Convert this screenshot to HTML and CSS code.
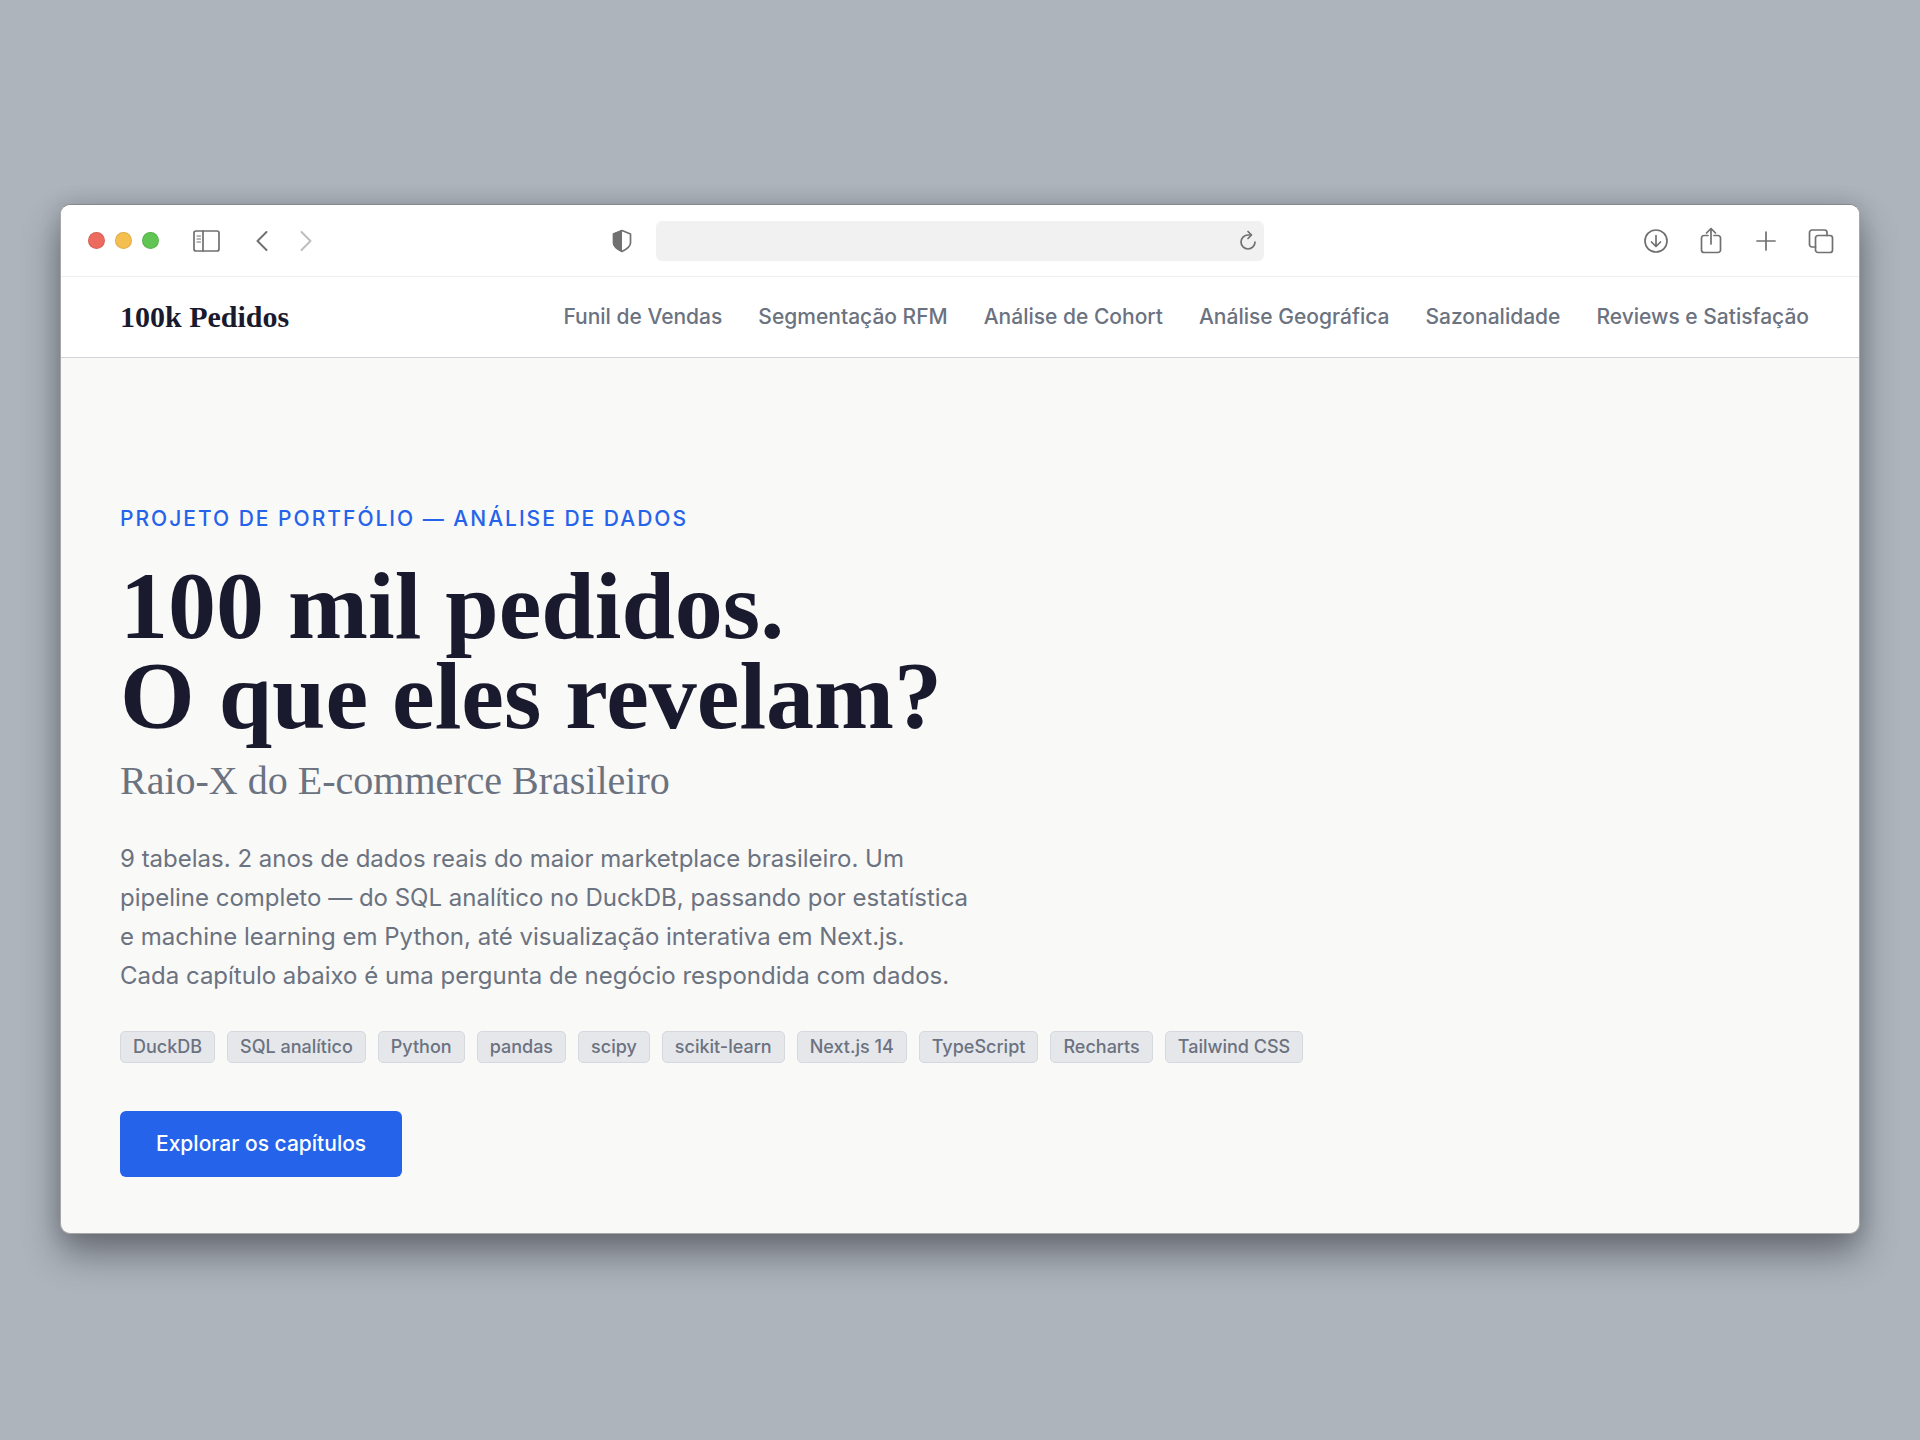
FILE: index.html
```
<!DOCTYPE html>
<html lang="pt-BR">
<head>
<meta charset="UTF-8">
<meta name="viewport" content="width=device-width, initial-scale=1.0">
<title>100k Pedidos</title>
<link rel="stylesheet" href="styles.css">
</head>
<body>

<div class="window">
  <div class="toolbar">
    <div class="toolbar-left">
      <div class="lights">
        <span class="light red"></span>
        <span class="light yellow"></span>
        <span class="light green"></span>
      </div>
      <button type="button" class="icon-btn sidebar-btn" aria-label="Barra lateral">
        <svg viewBox="0 0 28 28"><rect x="2" y="4" width="25" height="20" rx="2"/><path d="M11 4v20"/><path class="thin" d="M5 9h3.500M5 12h3.500M5 15h3.500"/></svg>
      </button>
      <div class="history">
        <button type="button" class="icon-btn" aria-label="Voltar">
          <svg viewBox="0 0 28 28"><path class="bold" d="M18.500 5L9.500 14l9 9"/></svg>
        </button>
        <button type="button" class="icon-btn faded" aria-label="Avançar">
          <svg viewBox="0 0 28 28"><path class="bold" d="M9.500 5l9 9-9 9"/></svg>
        </button>
      </div>
      <button type="button" class="icon-btn shield-btn" aria-label="Privacidade">
        <svg viewBox="0 0 28 28"><path d="M14 3.500l8.500 3.500v9c0 3.500-4.500 6.500-8.500 8.500-4-2-8.500-5-8.500-8.500V7z"/><path class="solid" d="M14 3L5 6.500V16c0 4 5 7 9 9z"/></svg>
      </button>
    </div>
    <div class="address">
      <input type="text" class="address-input" aria-label="Endereço">
      <button type="button" class="reload-btn" aria-label="Recarregar">
        <svg viewBox="0 0 20 22"><path d="M17 12a7 7 0 1 1-7-7h3"/><path d="M10 1.500L13.500 5 10 8.500"/></svg>
      </button>
    </div>
    <div class="toolbar-right">
      <button type="button" class="icon-btn" aria-label="Downloads">
        <svg viewBox="0 0 28 28"><circle cx="14" cy="14" r="11"/><path d="M14 8.500v10.500M9.500 15l4.500 4.500 4.500-4.500"/></svg>
      </button>
      <button type="button" class="icon-btn" aria-label="Compartilhar">
        <svg viewBox="0 0 28 28"><path d="M11 8.500H7a2.500 2.500 0 0 0-2.500 2.500v12A2.500 2.500 0 0 0 7 25.500h14a2.500 2.500 0 0 0 2.500-2.500V11A2.500 2.500 0 0 0 21 8.500h-4"/><path d="M14 17V1.500M9.500 6L14 1.500 18.500 6"/></svg>
      </button>
      <button type="button" class="icon-btn" aria-label="Nova aba">
        <svg viewBox="0 0 28 28"><path d="M14 5v18M5 14h18"/></svg>
      </button>
      <button type="button" class="icon-btn" aria-label="Abas">
        <svg viewBox="0 0 28 28"><rect x="8.500" y="8.500" width="17" height="17" rx="2.500"/><path d="M8.500 20H5a2.500 2.500 0 0 1-2.500-2.500V5.500A2.500 2.500 0 0 1 5 3h12.500A2.500 2.500 0 0 1 20 5.500v3"/></svg>
      </button>
    </div>
  </div>

  <header class="site-header">
    <a href="#" class="logo">100k Pedidos</a>
    <nav class="site-nav">
      <a href="#">Funil de Vendas</a>
      <a href="#">Segmentação RFM</a>
      <a href="#">Análise de Cohort</a>
      <a href="#">Análise Geográfica</a>
      <a href="#">Sazonalidade</a>
      <a href="#">Reviews e Satisfação</a>
    </nav>
  </header>

  <main class="hero">
    <p class="eyebrow">Projeto de Portfólio — Análise de Dados</p>
    <h1>100 mil pedidos.<br>O que eles revelam?</h1>
    <p class="subtitle">Raio-X do E-commerce Brasileiro</p>
    <p class="intro">9 tabelas. 2 anos de dados reais do maior marketplace brasileiro. Um pipeline completo — do SQL analítico no DuckDB, passando por estatística e machine learning em Python, até visualização interativa em Next.js. <br>Cada capítulo abaixo é uma pergunta de negócio respondida com dados.</p>
    <ul class="tags">
      <li>DuckDB</li>
      <li>SQL analítico</li>
      <li>Python</li>
      <li>pandas</li>
      <li>scipy</li>
      <li>scikit-learn</li>
      <li>Next.js 14</li>
      <li>TypeScript</li>
      <li>Recharts</li>
      <li>Tailwind CSS</li>
    </ul>
    <a href="#" class="cta">Explorar os capítulos</a>
  </main>
</div>

</body>
</html>
```
FILE: styles.css
```
* {
  box-sizing: border-box;
}
body {
  margin: 0;
  min-height: 100vh;
  padding: 60px 60px 62px;
  display: flex;
  align-items: center;
  background-color: #adb4bc;
  font-family: Inter, sans-serif;
  color: #6b7280;
}
a {
  color: inherit;
  text-decoration: none;
}
button {
  padding: 0;
  border: none;
  background: none;
  cursor: pointer;
}
svg {
  display: block;
  width: 100%;
  height: 100%;
  fill: none;
  stroke: currentColor;
  stroke-width: 1.7;
  stroke-linecap: round;
  stroke-linejoin: round;
}
svg .thin {
  stroke-width: 1.2;
}
svg .bold {
  stroke-width: 2;
}
svg .solid {
  fill: currentColor;
  stroke: none;
}

.window {
  flex: 1;
  min-width: 0;
  overflow: hidden;
  border: 1px solid #a5a7a8;
  border-top-color: #86898c;
  border-radius: 10px;
  background-color: #f9f9f7;
  box-shadow: 0 20px 36px rgba(28, 28, 36, 0.45), 0 0 20px rgba(28, 28, 36, 0.15);
}

/* barra do navegador */
.toolbar {
  display: grid;
  grid-template-columns: 1fr minmax(0, 608px) 1fr;
  align-items: center;
  height: 72px;
  background-color: #fff;
  border-bottom: 1px solid #efeff0;
  color: #707070;
}
.toolbar-left {
  display: flex;
  align-items: center;
  padding: 0 20px 0 27px;
}
.lights {
  display: flex;
  gap: 10px;
}
.light {
  width: 17px;
  height: 17px;
  border-radius: 50%;
  border: 1px solid rgba(0, 0, 0, 0.1);
}
.red {
  background-color: #ed6a5e;
}
.yellow {
  background-color: #f5bf4f;
}
.green {
  background-color: #61c554;
}
.icon-btn {
  width: 28px;
  height: 28px;
  color: #707070;
}
.icon-btn.faded {
  color: #bdbdbd;
}
.sidebar-btn {
  margin: 0 28px 0 33px;
}
.history {
  display: flex;
  gap: 16px;
}
.shield-btn {
  margin-left: auto;
}
.address {
  display: flex;
  align-items: center;
  height: 40px;
  padding-right: 6px;
  background-color: #f1f1f1;
  border-radius: 6px;
}
.address-input {
  flex: 1;
  min-width: 0;
  height: 100%;
  padding: 0 12px;
  border: none;
  outline: none;
  background: transparent;
  font: 18px Inter, sans-serif;
}
.reload-btn {
  width: 20px;
  height: 22px;
  color: #707070;
}
.toolbar-right {
  display: flex;
  justify-content: flex-end;
  gap: 27px;
  padding-right: 24px;
}

/* cabeçalho */
.site-header {
  display: flex;
  align-items: center;
  justify-content: space-between;
  gap: 36px;
  padding: 24px 50px 24px 59px;
  background-color: #fff;
  border-bottom: 1px solid #d1d5db;
}
.logo {
  font: bold 30px/32px "Liberation Serif", serif;
  color: #1a1a2e;
}
.site-nav {
  display: flex;
  gap: 36px;
  font-size: 21px;
  line-height: 30px;
  font-weight: 500;
}

/* hero */
.hero {
  padding: 146px 59px 56px;
}
.eyebrow {
  margin: 0 0 27px;
  font-size: 21px;
  line-height: 30px;
  font-weight: 500;
  letter-spacing: 2px;
  text-transform: uppercase;
  color: #2563eb;
}
h1 {
  margin: 0 0 16px;
  font: bold 96px/90px "Liberation Serif", serif;
  color: #1a1a2e;
}
.subtitle {
  margin: 0 0 34px;
  font: 40px/48px "Liberation Serif", serif;
}
.intro {
  max-width: 864px;
  margin: 0 0 36px;
  font-size: 24px;
  line-height: 39px;
}
.tags {
  display: flex;
  flex-wrap: wrap;
  gap: 12px;
  margin: 0 0 48px;
  padding: 0;
  list-style: none;
}
.tags li {
  padding: 3px 12px;
  border: 1px solid #d5d8df;
  border-radius: 5px;
  background-color: #e5e7eb;
  font-size: 18px;
  line-height: 24px;
  font-weight: 500;
}
.cta {
  display: inline-block;
  padding: 18px 36px;
  border-radius: 6px;
  background-color: #2563eb;
  color: #fff;
  font-size: 21px;
  line-height: 30px;
  font-weight: 500;
  vertical-align: top;
}
```
